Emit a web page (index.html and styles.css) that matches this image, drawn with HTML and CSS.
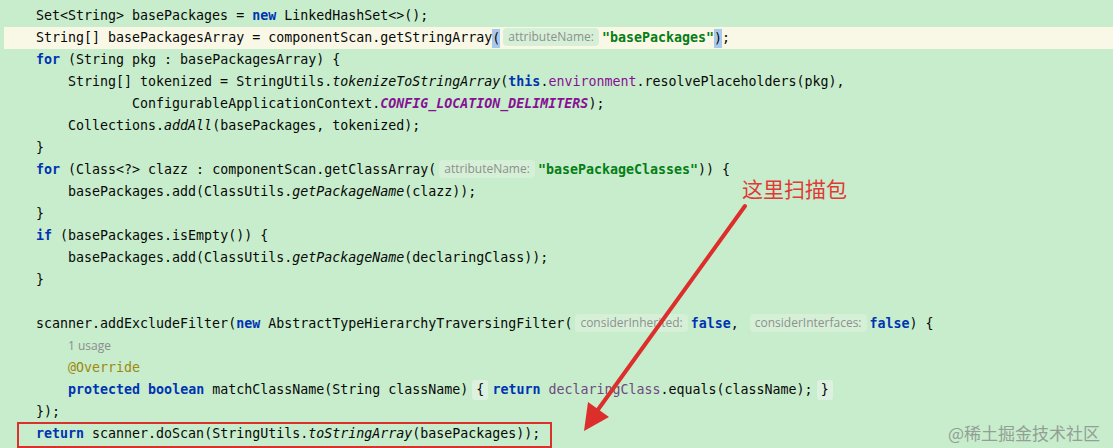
FILE: index.html
```html
<!DOCTYPE html>
<html lang="zh">
<head>
  <meta charset="UTF-8">
  <title>ComponentScan basePackages</title>
  <link rel="stylesheet" href="styles.css">
</head>
<body>
  <div class="editor">
    <div class="line">Set&lt;String&gt; basePackages = <span class="kw">new</span> LinkedHashSet&lt;&gt;();</div>
    <div class="line current">String[] basePackagesArray = componentScan.getStringArray<span class="brace">(</span><span class="hint">attributeName:</span><span class="str">"basePackages"</span><span class="brace">)</span>;</div>
    <div class="line"><span class="kw">for</span> (String pkg : basePackagesArray) {</div>
    <div class="line">    String[] tokenized = StringUtils.<span class="it">tokenizeToStringArray</span>(<span class="kw">this</span>.<span class="field">environment</span>.resolvePlaceholders(pkg),</div>
    <div class="line">            ConfigurableApplicationContext.<span class="const">CONFIG_LOCATION_DELIMITERS</span>);</div>
    <div class="line">    Collections.<span class="it">addAll</span>(basePackages, tokenized);</div>
    <div class="line">}</div>
    <div class="line"><span class="kw">for</span> (Class&lt;?&gt; clazz : componentScan.getClassArray(<span class="hint">attributeName:</span><span class="str">"basePackageClasses"</span>)) {</div>
    <div class="line">    basePackages.add(ClassUtils.<span class="it">getPackageName</span>(clazz));</div>
    <div class="line">}</div>
    <div class="line"><span class="kw">if</span> (basePackages.isEmpty()) {</div>
    <div class="line">    basePackages.add(ClassUtils.<span class="it">getPackageName</span>(declaringClass));</div>
    <div class="line">}</div>
    <div class="line"> </div>
    <div class="line">scanner.addExcludeFilter(<span class="kw">new</span> AbstractTypeHierarchyTraversingFilter(<span class="hint">considerInherited:</span><span class="kw">false</span>, <span class="hint">considerInterfaces:</span><span class="kw">false</span>) {</div>
    <div class="line">    <span class="usage">1 usage</span></div>
    <div class="line">    <span class="ann">@Override</span></div>
    <div class="line">    <span class="kw">protected</span> <span class="kw">boolean</span> matchClassName(String className) <span class="fold">{</span> <span class="kw">return</span> <span class="captured">declaringClass</span>.equals(className); <span class="fold">}</span></div>
    <div class="line">});</div>
    <div class="line"><span class="kw">return</span> scanner.doScan(StringUtils.<span class="it">toStringArray</span>(basePackages));</div>
  </div>

  <!-- annotations drawn on top of the screenshot -->
  <div class="scan-box"></div>
  <div class="note">这里扫描包</div>
  <svg class="arrow" width="1113" height="448" viewBox="0 0 1113 448">
    <line x1="745" y1="206" x2="597" y2="411" stroke="#dc2f2c" stroke-width="4" stroke-linecap="round"/>
    <polygon points="584,431 588,402 609,417" fill="#dc2f2c"/>
  </svg>
  <div class="watermark">@稀土掘金技术社区</div>
</body>
</html>
```

FILE: styles.css
```css
* {
  box-sizing: border-box;
}

body {
  margin: 0;
  width: 1113px;
  height: 448px;
  overflow: hidden;
  position: relative;
  background-color: #c7edcc;
}

.editor {
  padding-top: 5px;
  border-left: 4px solid #c7edcc;
  font-family: "DejaVu Sans Mono", "Liberation Mono", monospace;
  font-size: 13.3px;
  color: #080808;
}

.line {
  height: 22px;
  line-height: 22px;
  padding-left: 32px;
  white-space: pre;
}

.line.current {
  background-color: #f9f8e6;
}

.kw {
  color: #0033b3;
  font-weight: bold;
}

.str {
  color: #067d17;
  font-weight: bold;
}

.it {
  font-style: italic;
}

.field {
  color: #871094;
}

.const {
  color: #871094;
  font-weight: bold;
  font-style: italic;
}

.captured {
  color: #6e4a7e;
}

.ann {
  color: #9e880d;
}

.brace {
  background-color: #a8c9ec;
  display: inline-block;
  height: 19px;
  line-height: 19px;
  vertical-align: middle;
}

.fold {
  background-color: #dcf1df;
  display: inline-block;
  padding: 0 4px;
  margin: 0 -4px;
  height: 20px;
  line-height: 20px;
  border-radius: 3px;
}

.hint {
  display: inline-block;
  font-family: "Open Sans", "Noto Sans", sans-serif;
  font-size: 12px;
  color: #8d918d;
  background-color: #d6f0d8;
  border-radius: 4px;
  padding: 0 5px;
  margin: 0 3px;
  height: 18px;
  line-height: 18px;
  vertical-align: middle;
  position: relative;
  top: -1px;
}

.usage {
  font-family: "Open Sans", "Noto Sans", sans-serif;
  font-size: 12px;
  color: #8c8c8c;
}

.scan-box {
  position: absolute;
  left: 17px;
  top: 422px;
  width: 535px;
  height: 26px;
  border: 2px solid #d9312c;
}

.note {
  position: absolute;
  left: 742px;
  top: 173px;
  font-family: "Noto Sans CJK SC", sans-serif;
  font-size: 21px;
  color: #e03a36;
}

.arrow {
  position: absolute;
  left: 0;
  top: 0;
}

.watermark {
  position: absolute;
  left: 948px;
  top: 420px;
  font-family: "Noto Sans CJK SC", sans-serif;
  font-size: 17px;
  color: #939f95;
}
```
